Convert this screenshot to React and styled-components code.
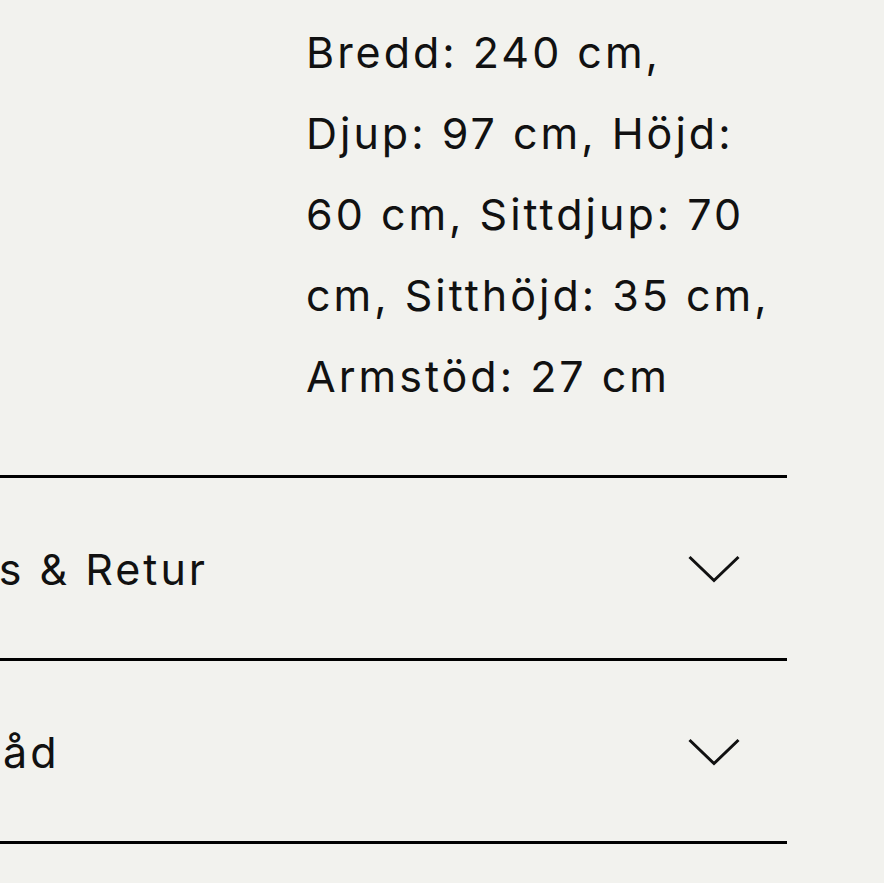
import React from "react";
import styled, { createGlobalStyle } from "styled-components";

const Global = createGlobalStyle`
  html, body {
    margin: 0;
    padding: 0;
    background: #f2f2ee;
  }
  body {
    font-family: Inter, "Liberation Sans", sans-serif;
    color: #111;
    -webkit-font-smoothing: antialiased;
  }
`;

const Page = styled.div`
  width: 884px;
  height: 883px;
  overflow: hidden;
  background: #f2f2ee;
`;

const Accordion = styled.div`
  margin-left: -185px;
  width: 972px;
`;

const Panel = styled.div`
  display: grid;
  grid-template-columns: 491px 472px;
  padding: 12px 0 58px 0;
`;

const Value = styled.p`
  margin: 0;
  font-size: 43px;
  line-height: 81px;
  letter-spacing: 3px;
  font-weight: 400;
`;

const Item = styled.button`
  all: unset;
  box-sizing: border-box;
  display: flex;
  align-items: center;
  justify-content: space-between;
  width: 100%;
  padding-right: 47px;
  padding-top: 2px;
  border-top: 3px solid #000;
  border-bottom: ${(p) => (p.$last ? "3px solid #000" : "none")};
  height: ${(p) => (p.$last ? "186px" : "183px")};
  cursor: pointer;
`;

const Title = styled.span`
  font-size: 43px;
  letter-spacing: 3px;
  line-height: 1;
`;

const Chevron = () => (
  <svg width="52" height="28" viewBox="0 0 52 28" fill="none">
    <polyline
      points="1.5,2 26,25.5 50.5,2"
      stroke="#111"
      strokeWidth="3"
      strokeLinecap="butt"
      strokeLinejoin="miter"
    />
  </svg>
);

export default function App() {
  return (
    <>
      <Global />
      <Page>
        <Accordion>
          <Panel>
            <span />
            <Value>
              Bredd: 240 cm, Djup: 97 cm, Höjd: 60 cm, Sittdjup: 70 cm,
              Sitthöjd: 35 cm, Armstöd: 27 cm
            </Value>
          </Panel>
          <Item>
            <Title>Leverans &amp; Retur</Title>
            <Chevron />
          </Item>
          <Item $last>
            <Title>Skötselråd</Title>
            <Chevron />
          </Item>
        </Accordion>
      </Page>
    </>
  );
}
